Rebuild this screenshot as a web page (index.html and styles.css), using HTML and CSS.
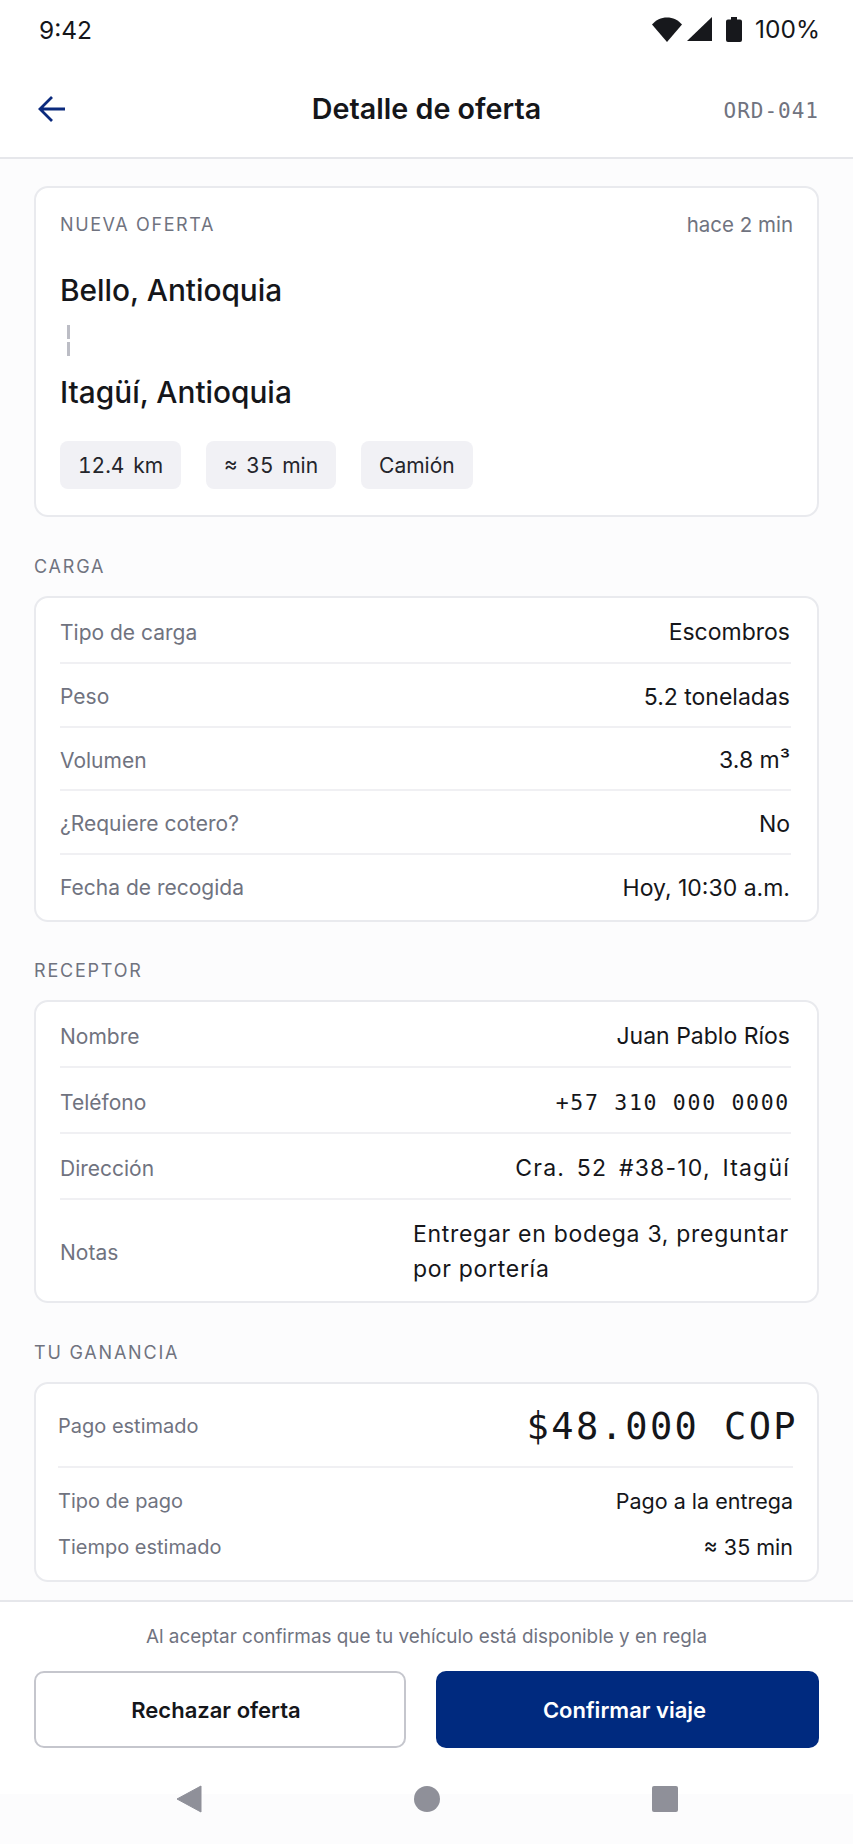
FILE: index.html
```html
<!DOCTYPE html>
<html lang="es">
  <head>
    <meta charset="utf-8">
    <title>Detalle de oferta</title>
    <link rel="stylesheet" href="styles.css">
  </head>
  <body>
    <div class="statusbar">
      <span class="time">9:42</span>
      <div class="status-icons">
        <svg class="ic-wifi" width="30" height="25" viewBox="0 0 30 25"><path d="M0 7.500C4 3 9 .5 15 .5S26 3 30 7.500L15 25z" fill="#17181c"/></svg>
        <svg class="ic-signal" width="25" height="24" viewBox="0 0 25 24"><path d="M25 0V24H0z" fill="#17181c"/></svg>
        <svg class="ic-battery" width="16" height="25" viewBox="0 0 16 25"><path d="M5 0h6v2.500h3a2 2 0 0 1 2 2V23a2 2 0 0 1-2 2H2a2 2 0 0 1-2-2V4.500a2 2 0 0 1 2-2h3z" fill="#17181c"/></svg>
        <span class="battery-text">100%</span>
      </div>
    </div>

    <header class="topbar">
      <svg class="back" width="30" height="30" viewBox="0 0 30 30"><path d="M28 15H3M15 3 3 15l12 12" fill="none" stroke="#0b2a7d" stroke-width="2.800"/></svg>
      <h1>Detalle de oferta</h1>
      <span class="order">ORD-041</span>
    </header>

    <main class="content">
      <section class="card offer">
        <div class="offer-top">
          <span class="eyebrow">NUEVA OFERTA</span>
          <span class="ago">hace 2 min</span>
        </div>
        <div class="place">Bello, Antioquia</div>
        <div class="route-line"></div>
        <div class="place">Itagüí, Antioquia</div>
        <div class="chips">
          <span class="chip">12.4 km</span>
          <span class="chip">≈ 35 min</span>
          <span class="chip">Camión</span>
        </div>
      </section>

      <h2 class="section-title">CARGA</h2>
      <section class="card list list-carga">
        <div class="row"><span class="key">Tipo de carga</span><span class="val">Escombros</span></div>
        <div class="row"><span class="key">Peso</span><span class="val">5.2 toneladas</span></div>
        <div class="row"><span class="key">Volumen</span><span class="val">3.8 m³</span></div>
        <div class="row"><span class="key">¿Requiere cotero?</span><span class="val">No</span></div>
        <div class="row"><span class="key">Fecha de recogida</span><span class="val">Hoy, 10:30 a.m.</span></div>
      </section>

      <h2 class="section-title">RECEPTOR</h2>
      <section class="card list list-receptor">
        <div class="row"><span class="key">Nombre</span><span class="val">Juan Pablo Ríos</span></div>
        <div class="row"><span class="key">Teléfono</span><span class="val mono">+57 310 000 0000</span></div>
        <div class="row"><span class="key">Dirección</span><span class="val spaced">Cra. 52 #38-10, Itagüí</span></div>
        <div class="row row-notes"><span class="key">Notas</span><span class="val notes">Entregar en bodega 3, preguntar por portería</span></div>
      </section>

      <h2 class="section-title">TU GANANCIA</h2>
      <section class="card earnings">
        <div class="earn-main">
          <span class="key">Pago estimado</span>
          <span class="amount">$48.000 COP</span>
        </div>
        <div class="earn-row earn-first"><span class="key">Tipo de pago</span><span class="val">Pago a la entrega</span></div>
        <div class="earn-row"><span class="key">Tiempo estimado</span><span class="val">≈ 35 min</span></div>
      </section>
    </main>

    <footer class="actions">
      <p class="disclaimer">Al aceptar confirmas que tu vehículo está disponible y en regla</p>
      <div class="buttons">
        <button class="btn btn-reject">Rechazar oferta</button>
        <button class="btn btn-confirm">Confirmar viaje</button>
      </div>
    </footer>

    <nav class="navbar">
      <svg width="26" height="28" viewBox="0 0 26 28"><path d="M25 1V27L1 14z" fill="#8f9099" stroke="#8f9099" stroke-linejoin="round"/></svg>
      <svg width="26" height="28" viewBox="0 0 26 28"><circle cx="13" cy="14" r="13" fill="#8f9099"/></svg>
      <svg width="26" height="28" viewBox="0 0 26 28"><rect y="1" width="26" height="26" rx="2" fill="#8f9099"/></svg>
    </nav>
  </body>
</html>
```

FILE: styles.css
```css
* {
  box-sizing: border-box;
}

html,
body {
  margin: 0;
  padding: 0;
}

body {
  width: 853px;
  height: 1844px;
  overflow: hidden;
  background: #fcfcfd;
  color: #15161a;
  font-family: Inter, "Liberation Sans", sans-serif;
  font-size: 23px;
}

.statusbar {
  height: 58px;
  padding: 2px 33px 0 39px;
  display: flex;
  align-items: center;
  justify-content: space-between;
  background: #fff;
}

.time,
.battery-text {
  font-size: 24.500px;
  line-height: 30px;
}

.status-icons {
  display: flex;
  align-items: center;
  margin-top: -2px;
}

.ic-wifi {
  margin-right: 5px;
}

.ic-signal {
  margin-right: 14px;
}

.ic-battery {
  margin-right: 13px;
}

.topbar {
  height: 101px;
  padding: 3px 34px 0 37px;
  display: flex;
  align-items: center;
  justify-content: space-between;
  position: relative;
  background: #fff;
  border-bottom: 2px solid #e6e7eb;
}

.topbar h1 {
  margin: 0;
  position: absolute;
  left: 0;
  right: 0;
  text-align: center;
  font-size: 28.700px;
  font-weight: 600;
  line-height: 36px;
}

.order {
  font-family: "DejaVu Sans Mono", monospace;
  font-size: 21px;
  letter-spacing: 1px;
  color: #70737f;
  margin-top: 4px;
}

.content {
  height: 1442px;
  padding: 27px 34px 0;
}

.card {
  background: #fff;
  border: 2px solid #e9eaee;
  border-radius: 14px;
}

.offer {
  height: 331px;
  padding: 0 24px;
}

.offer-top {
  height: 73px;
  display: flex;
  align-items: center;
  justify-content: space-between;
}

.eyebrow {
  font-size: 18px;
  letter-spacing: 1.600px;
  color: #70737f;
}

.ago {
  font-size: 20.500px;
  color: #70737f;
}

.place {
  font-size: 29.800px;
  font-weight: 500;
  line-height: 36px;
  margin-top: 11px;
}

.route-line {
  width: 3px;
  height: 31px;
  margin: 17px 0 18px 7px;
  background: repeating-linear-gradient(to bottom, #bcbdc5 0 14px, transparent 14px 17px);
}

.chips {
  display: flex;
  gap: 25px;
  margin-top: 31px;
}

.chip {
  height: 48px;
  padding: 0 18px;
  display: flex;
  align-items: center;
  background: #f1f1f5;
  border-radius: 8px;
  font-size: 21px;
  font-variant-numeric: tabular-nums;
  word-spacing: 3px;
  color: #24252b;
}

.section-title {
  margin: 0;
  height: 79px;
  padding-top: 38px;
  font-size: 18px;
  font-weight: 400;
  line-height: 24px;
  letter-spacing: 1.800px;
  color: #70737f;
}

.list {
  padding: 0 26px 0 24px;
}

.row {
  display: flex;
  align-items: center;
  justify-content: space-between;
  padding-top: 4px;
  border-bottom: 2px solid #f0f0f3;
}

.row:last-child {
  border-bottom: 0;
}

.list-carga {
  height: 326px;
  margin-bottom: -1px;
}

.list-carga .row {
  height: 63.600px;
}

.list-carga .row:first-child {
  height: 66px;
}

.list-carga .row:last-child {
  height: 62px;
}

.list-receptor {
  height: 303px;
}

.list-receptor .row {
  height: 66px;
}

.list-receptor .row-notes {
  height: 100px;
  padding-top: 4px;
}

.key {
  font-size: 21px;
  color: #70737f;
}

.val {
  font-size: 23px;
  padding-right: 1px;
}

.mono {
  font-family: "DejaVu Sans Mono", monospace;
  font-size: 21.500px;
  letter-spacing: 1.700px;
}

.spaced {
  letter-spacing: 1.200px;
  word-spacing: 4px;
}

.notes {
  width: 378px;
  line-height: 35px;
  letter-spacing: .7px;
}

.earnings {
  height: 200px;
  padding: 0 24px 0 22px;
}

.earn-main {
  height: 84px;
  padding-top: 2px;
  display: flex;
  align-items: center;
  justify-content: space-between;
  border-bottom: 2px solid #f0f0f3;
}

.amount {
  font-family: "DejaVu Sans Mono", monospace;
  font-size: 37px;
  letter-spacing: 2.400px;
  margin-right: -5px;
}

.earn-row {
  height: 45px;
  display: flex;
  align-items: center;
  justify-content: space-between;
}

.earn-first {
  height: 46px;
  margin-top: 10px;
}

.earnings .key {
  font-size: 20px;
}

.earn-row .val {
  font-size: 21.500px;
  padding-right: 0;
}

.actions {
  height: 194px;
  position: absolute;
  top: 1600px;
  left: 0;
  width: 853px;
  background: #fff;
  border-top: 2px solid #e6e7eb;
}

.disclaimer {
  margin: 0;
  height: 69px;
  display: flex;
  align-items: center;
  justify-content: center;
  font-size: 18.900px;
  color: #70737f;
}

.buttons {
  display: flex;
  gap: 30px;
  padding: 0 34px;
}

.btn {
  height: 77px;
  border-radius: 10px;
  font-family: Inter, "Liberation Sans", sans-serif;
  font-size: 22px;
  font-weight: 600;
}

.btn-reject {
  width: 372px;
  padding-right: 14px;
  background: #fff;
  border: 2px solid #c5c6cd;
  color: #15161a;
}

.btn-confirm {
  width: 383px;
  padding-right: 12px;
  background: #002a7f;
  border: 0;
  color: #fff;
}

.navbar {
  position: absolute;
  top: 1785px;
  left: 0;
  width: 853px;
  display: grid;
  grid-template-columns: 26px 26px 26px;
  justify-content: center;
  column-gap: 212px;
}
```
